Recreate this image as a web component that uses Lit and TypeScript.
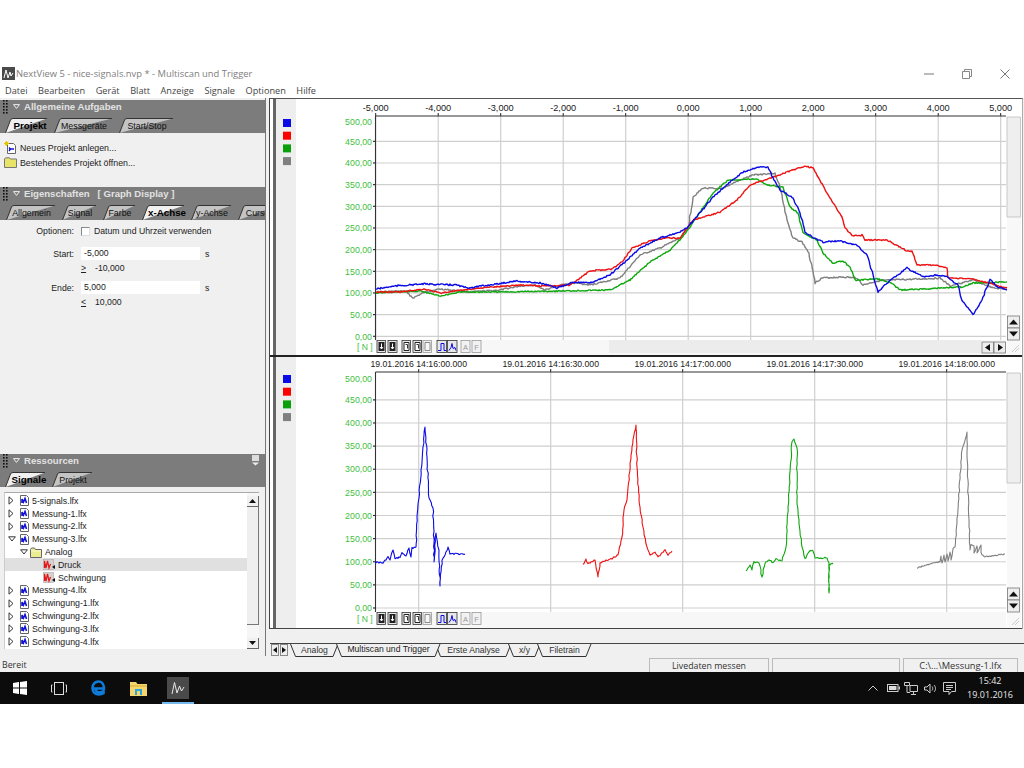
import { LitElement, html, css, svg } from "lit";
import { customElement } from "lit/decorators.js";

type P = [number, number];

function rng(seed: number) {
  let s = seed;
  return () => {
    s = (s * 9301 + 49297) % 233280;
    return s / 233280 - 0.5;
  };
}

function jag(pts: P[], amp: number, seed: number): string {
  const r = rng(seed);
  const out: string[] = [];
  for (let i = 0; i < pts.length - 1; i++) {
    const [x0, y0] = pts[i];
    const [x1, y1] = pts[i + 1];
    const dx = Math.abs(x1 - x0);
    const dy = Math.abs(y1 - y0);
    const n = Math.max(1, Math.round(Math.max(dx, dy / 4)));
    const steep = dy > dx * 2;
    for (let k = 0; k < n; k++) {
      const t = k / n;
      const nx = steep && k > 0 ? r() * amp * 0.7 : 0;
      const ny = steep ? 0 : r() * amp;
      out.push(`${(x0 + (x1 - x0) * t + nx).toFixed(1)},${(y0 + (y1 - y0) * t + ny).toFixed(1)}`);
    }
  }
  const l = pts[pts.length - 1];
  out.push(`${l[0]},${l[1]}`);
  return out.join(" ");
}

const BLUE = "#0a0ae6";
const RED = "#ee1111";
const GREEN = "#0ea80e";
const GRAY = "#808080";

const top1: { c: string; p: P[]; a: number }[] = [
  { c: GRAY, a: 1.5, p: [[376,292],[405,291],[413,298],[425,292],[440,289],[470,292],[500,290],[520,286],[535,285],[545,290],[560,285],[575,283],[590,285],[620,278],[640,255],[660,248],[680,238],[688,228],[693,197],[703,188],[723,189],[733,183],[753,175],[775,173],[780,187],[787,220],[793,238],[802,242],[809,253],[815,283],[822,278],[843,277],[857,278],[863,285],[877,281],[893,280],[920,279],[940,278],[950,286],[973,280],[993,288],[1007,289]] },
  { c: GREEN, a: 1.3, p: [[376,293],[420,291],[440,296],[460,292],[500,292],[560,291],[610,290],[630,280],[650,262],[670,250],[680,240],[690,227],[700,212],[713,193],[728,180],[757,179],[767,185],[783,187],[790,207],[798,213],[803,233],[817,240],[823,253],[833,263],[843,261],[850,267],[855,280],[877,279],[890,282],[900,290],[943,288],[963,287],[973,283],[1007,282]] },
  { c: RED, a: 1.3, p: [[376,292],[400,292],[424,289],[440,293],[480,288],[520,285],[540,286],[570,285],[590,271],[612,269],[622,262],[632,248],[650,241],[668,238],[680,238],[693,220],[720,212],[737,200],[750,185],[773,177],[793,170],[805,166],[813,168],[827,193],[842,217],[845,228],[853,236],[862,235],[865,240],[887,240],[907,251],[912,251],[917,265],[935,265],[947,268],[948,278],[973,279],[1007,288]] },
  { c: BLUE, a: 1.5, p: [[376,289],[395,286],[423,284],[457,285],[467,288],[497,284],[515,281],[540,283],[557,288],[573,282],[590,283],[610,275],[625,262],[640,248],[660,238],[680,232],[687,228],[700,213],[713,197],[730,182],[743,172],[757,167],[768,167],[773,178],[780,190],[793,198],[800,213],[805,232],[812,237],[823,242],[840,241],[857,245],[867,255],[877,288],[878,292],[887,283],[907,268],[923,277],[937,275],[947,277],[958,285],[962,300],[973,315],[982,300],[990,279],[997,287],[1007,290]] },
];

const bot: { c: string; p: P[]; a: number }[] = [
  { c: BLUE, a: 1.5, p: [[375,562],[383,563],[388,557],[390,560],[393,550],[395,559],[400,557],[402,553],[406,556],[409,548],[411,557],[412,548],[416,547],[417,517],[419,498],[421,470],[423,447],[425,427],[427,457],[429,498],[433,508],[434,543],[434,562],[436,533],[439,550],[440,586],[442,560],[445,555],[448,547],[450,554],[465,554]] },
  { c: RED, a: 1.5, p: [[583,565],[586,559],[588,564],[595,560],[598,577],[600,563],[613,558],[618,555],[622,537],[624,510],[627,500],[632,447],[636,425],[637,467],[639,500],[643,527],[647,547],[650,555],[655,552],[658,557],[665,550],[668,555],[672,551]] },
  { c: GREEN, a: 1.5, p: [[746,571],[750,565],[752,570],[754,562],[759,563],[762,577],[765,563],[770,560],[773,563],[776,559],[782,561],[786,547],[788,507],[792,442],[794,439],[797,448],[797,500],[802,547],[805,559],[810,550],[813,551],[815,558],[827,558],[829,563],[829,593],[829,565],[833,563]] },
  { c: GRAY, a: 1.2, p: [[917,568],[933,563],[940,562],[941,556],[942,563],[944,555],[945,562],[947,554],[948,561],[950,552],[951,560],[953,549],[955,547],[957,523],[962,450],[967,432],[968,488],[970,550],[971,545],[974,546],[974,553],[977,546],[977,553],[981,545],[981,553],[984,557],[1005,554]] },
];

function tool(x: number, y: number, w: number, kind: string, glyph: unknown) {
  const fill = kind === "off" ? "#f2f2f2" : "#e8e8e8";
  return svg`<rect x=${x} y=${y} width=${w} height="12" fill=${fill} stroke=${kind === "off" ? "#999" : "#333"} stroke-width=".8"/>${glyph}`;
}

function toolbar(y: number) {
  const dark = (x: number) => svg`<rect x=${x + 1.5} y=${y + 1.5} width="6" height="9" fill="#222"/><path d=${`M${x + 4.5} ${y + 3}v5m-1.5-1.5 1.5 2 1.5-2`} stroke="#fff" fill="none"/>`;
  const page = (x: number) => svg`<path d=${`M${x + 2} ${y + 2}h5v8h-5z`} fill="#fff" stroke="#222"/><path d=${`M${x + 3.5} ${y + 4}h2v4`} stroke="#333" fill="none"/>`;
  return svg`
    ${tool(377, y, 8.5, "on", dark(377))}
    ${tool(388, y, 9, "on", dark(388))}
    ${tool(402, y, 8.5, "on", page(402))}
    ${tool(413, y, 8.5, "on", page(413))}
    ${tool(423, y, 8.5, "off", svg`<path d=${`M${425} ${y + 2}h5v8h-5z`} fill="#f8f8f8" stroke="#888"/>`)}
    ${tool(437, y, 9.5, "on", svg`<path d=${`M438 ${y + 10}h3v-7h3v7h2`} stroke=${BLUE} fill="none"/>`)}
    ${tool(447.5, y, 9.5, "on", svg`<path d=${`M449 ${y + 10}l2-3 1-4 1 5 2-1 1 3`} stroke=${BLUE} fill="none"/>`)}
    ${tool(461, y, 9, "off", svg`<text class="toolT" x="465.5" y=${y + 9} text-anchor="middle">A</text>`)}
    ${tool(472, y, 9, "off", svg`<text class="toolT" x="476.5" y=${y + 9} text-anchor="middle">F</text>`)}
  `;
}

function arrowBtn(x: number, y: number, w: number, h: number, d: string) {
  return svg`<rect x=${x} y=${y} width=${w} height=${h} fill="#eee" stroke="#777" stroke-width=".8"/><path d=${d} fill="#111"/>`;
}

const yVals = ["500,00", "450,00", "400,00", "350,00", "300,00", "250,00", "200,00", "150,00", "100,00", "50,00", "0,00"];

function chart(o: {
  y0: number; h: number; axisY: number; zero: number; unit: number; tbY: number; cls: string;
  xs: { x: number; t: string }[]; series: { c: string; p: P[]; a: number }[];
  sw: number; thumbEnd: number; upY: number; hscroll: boolean; xlOff: number;
}) {
  const xr = 1006;
  const bottom = o.tbY;
  return html`<svg class="chart" viewBox="270 ${o.y0} 752 ${o.h}" width="752" height=${o.h}>
    <rect x="270" y=${o.y0} width="752" height=${o.h} fill="#fff"/>
    <rect x="273" y=${o.y0} width="3" height=${o.h} fill="#666"/>
    <rect x="276" y=${o.y0} width="20" height=${o.h} fill="#eeeeee"/>
    ${[BLUE, "#ff0000", "#0aa00a", GRAY].map((c, i) => svg`<rect x="283" y=${o.axisY + 3 + i * 12.7} width="8" height="8" fill=${c}/>`)}
    <rect x=${xr + 1} y=${o.axisY + 1} width="14" height=${o.h - (o.axisY - o.y0) - 1} fill="#f8f8f8"/>
    <rect x=${xr + 1} y=${o.axisY + 1} width="13.5" height=${o.thumbEnd - o.axisY - 1} fill="#efefef" stroke="#aaa" stroke-width=".6"/>
    ${yVals.map((t, i) => {
      const y = o.zero - (500 - i * 50) * o.unit;
      return svg`
        ${i > 0 ? svg`<line x1="373" x2=${xr} y1=${y} y2=${y} stroke="#cfcfcf" stroke-width="1.2"/><line x1="373" x2="376" y1=${y} y2=${y} stroke="#222"/>` : ""}
        <text class="yl" x="372" y=${y + (i === 0 ? 5.5 : 3.2)} text-anchor="end">${t}</text>`;
    })}
    ${o.xs.map((v) => svg`
      <line x1=${v.x} x2=${v.x} y1=${o.axisY} y2=${bottom} stroke="#cfcfcf" stroke-width="1.2"/>
      <line x1=${v.x} x2=${v.x} y1=${o.axisY - 3} y2=${o.axisY} stroke="#222"/>
      <text class=${o.cls} x=${v.x} y=${o.axisY - o.xlOff} text-anchor="middle">${v.t}</text>`)}
    <line x1="375.5" x2=${xr} y1=${o.axisY} y2=${o.axisY} stroke="#333" stroke-width="1.1"/>
    <line x1="375.5" x2="375.5" y1=${o.axisY} y2=${bottom} stroke="#333" stroke-width="1.1"/>
    ${o.series.map((s, i) => svg`<polyline points=${jag(s.p, s.a, 17 + i * 31)} fill="none" stroke=${s.c} stroke-width=${o.sw} stroke-linejoin="round"/>`)}
    <rect x="376" y=${o.tbY} width=${xr - 376} height=${o.h + o.y0 - o.tbY} fill="#f7f7f7"/>
    ${o.hscroll ? svg`<rect x="609" y=${o.tbY} width="372" height="13" fill="#ececec"/>
      ${arrowBtn(982, o.tbY + 2, 11.5, 11, `M985 ${o.tbY + 7.5}l5-3.5v7z`)}
      ${arrowBtn(994, o.tbY + 2, 11.5, 11, `M1003 ${o.tbY + 7.5}l-5-3.5v7z`)}` : ""}
    <text class="nl" x="357" y=${o.tbY + 10}>[ N ]</text>
    ${toolbar(o.tbY + 0.5)}
    ${arrowBtn(1007.5, o.upY, 12, 12, `M1013.5 ${o.upY + 3.5}l4.5 5h-9z`)}
    ${arrowBtn(1007.5, o.upY + 12, 12, 12, `M1013.5 ${o.upY + 20.5}l4.5-5h-9z`)}
    <path d=${`M1012 ${o.h + o.y0 - 3}l7-7m-4 7l4-4`} stroke="#ccc" fill="none"/>
  </svg>`;
}

const grip = html`<svg class="grip" width="5" height="14" viewBox="0 0 5 14">
  ${[1, 4, 7, 10, 13].map((y) => svg`<rect x="0" y=${y - 1} width="1.6" height="1.6" fill="#111"/><rect x="3" y=${y - 1} width="1.6" height="1.6" fill="#111"/>`)}
</svg>`;
const tri = html`<svg class="tri" width="7" height="5" viewBox="0 0 7 5"><path d="M.5.6h6L3.500 4.400z" fill="none" stroke="#eee"/></svg>`;

function tab(label: string, w: number, active = false) {
  const h = 15;
  return html`<div class="tab ${active ? "on" : ""}" style="width:${w}px">
    <svg width=${w} height=${h} viewBox="0 0 ${w} ${h}"><path d="M.5 ${h}L5.5 2Q6.2.5 8 .5H${w - 8}Q${w - 6}.5 ${w - 5.5} 2L${w - 1} ${h}" fill=${active ? "#f0f0f0" : "#c4c4c4"} stroke="#333"/></svg>
    <span>${label}</span>
  </div>`;
}

function btab(label: string, w: number, ml: number, active = false) {
  return html`<div class="btab ${active ? "on" : ""}" style="width:${w}px;margin-left:${ml}px">
    <svg width=${w} height="13" viewBox="0 0 ${w} 13"><path d="M.5 0L5.500 12.500H${w - 6}L${w - 1} 0" fill="#f0f0f0" stroke="#333"/></svg>
    <span>${label}</span>
  </div>`;
}

const fileIcon = html`<svg class="ic" width="9" height="11" viewBox="0 0 9 11"><path d="M.5.5h6l2 2v8h-8z" fill="#fff" stroke="#666"/><path d="M2 8V4l1.500 3L5 3.500 6.500 8" fill="none" stroke="#1212d8" stroke-width="1.6"/></svg>`;
const folderIcon = html`<svg class="ic" width="12" height="11" viewBox="0 0 12 11"><path d="M.5 2.500L1.500 1h3l1 1.500h6v8H.5z" fill="#ecec90" stroke="#666"/><path d="M1 4h10" stroke="#fbfbc8"/></svg>`;
const sigIcon = html`<svg class="ic" width="13" height="11" viewBox="0 0 13 11"><rect x=".5" y=".5" width="10" height="10" fill="#d8d0d0" stroke="#aaa" stroke-width=".6"/><path d="M1.500 9V2l1.500 7 1.500-7 1.500 7 1.500-4" fill="none" stroke="#e01818" stroke-width="1.2"/><path d="M9 8l3-2v4z" fill="#111"/></svg>`;
const expR = html`<span class="exb"><svg width="6" height="9" viewBox="0 0 6 9"><path d="M1 .8L5 4.500 1 8.200z" fill="#fff" stroke="#222" stroke-width=".9"/></svg></span>`;
const expD = html`<span class="exb"><svg width="8" height="6" viewBox="0 0 8 6"><path d="M.6.8h6.800L4 5z" fill="#fff" stroke="#222" stroke-width=".9"/></svg></span>`;

const tree: { t: string; d: number; k: string; open?: boolean; sel?: boolean }[] = [
  { t: "5-signals.lfx", d: 0, k: "f" },
  { t: "Messung-1.lfx", d: 0, k: "f" },
  { t: "Messung-2.lfx", d: 0, k: "f" },
  { t: "Messung-3.lfx", d: 0, k: "f", open: true },
  { t: "Analog", d: 1, k: "d", open: true },
  { t: "Druck", d: 2, k: "s", sel: true },
  { t: "Schwingung", d: 2, k: "s" },
  { t: "Messung-4.lfx", d: 0, k: "f" },
  { t: "Schwingung-1.lfx", d: 0, k: "f" },
  { t: "Schwingung-2.lfx", d: 0, k: "f" },
  { t: "Schwingung-3.lfx", d: 0, k: "f" },
  { t: "Schwingung-4.lfx", d: 0, k: "f" },
];

@customElement("app-root")
export class AppRoot extends LitElement {
  static styles = css`
    :host { display: block; width: 1024px; height: 768px; background: #fff; overflow: hidden; font-family: "Liberation Sans", Arial, sans-serif; font-size: 8.8px; color: #222; }
    .topgap { height: 65px; background: #fff; }
    .window { height: 607px; display: flex; flex-direction: column; background: #f0f0f0; }
    .title { height: 17px; background: #fff; display: flex; align-items: center; padding-left: 2px; font-family: "Open Sans", sans-serif; font-size: 9.4px; color: #808080; }
    .title .name { margin-left: 1px; flex: 1; }
    .wc { display: flex; width: 114px; }
    .wc div { width: 38px; display: flex; justify-content: center; }
    .menu { height: 16px; background: #fff; display: flex; align-items: center; font-family: "Open Sans", sans-serif; font-size: 9.2px; color: #444; padding-left: 5px; }
    .menu span { margin-right: 10.5px; }
    .main { height: 558px; display: flex; }
    .left { width: 265px; display: flex; flex-direction: column; background: #f0f0f0; flex: none; padding-top: 2px; box-sizing: border-box; }
    .block { background: #7c7c7c; height: 33px; flex: none; display: flex; flex-direction: column; overflow: hidden; }
    .head { height: 18px; flex: none; display: flex; align-items: center; padding: 0 0 5px 3px; box-sizing: border-box; color: #e2e2e2; font-weight: bold; font-size: 9.6px; }
    .grip { margin-right: 5px; }
    .tri { margin-right: 4px; }
    .head .pin { margin-left: auto; margin-right: 5px; }
    .tabs { display: flex; padding-left: 5px; height: 15px; flex: none; }
    .tabs.t2 { padding-left: 6px; }
    .tab { display: grid; margin-right: -1px; align-items: center; justify-items: center; font-size: 8.8px; color: #111; flex: none; }
    .tab > * { grid-area: 1 / 1; }
    .tab span { z-index: 1; padding-right: 6px; }
    .tab.on { z-index: 2; font-weight: bold; font-size: 9.8px; color: #000; }
    .tab.on span { padding-right: 0; }
    .c1 { height: 54px; flex: none; padding: 7px 0 0 4px; box-sizing: border-box; }
    .c1 .l { display: flex; align-items: center; height: 15px; gap: 3px; font-size: 8.8px; }
    .c2 { height: 234px; flex: none; padding-top: 6px; box-sizing: border-box; }
    .row { display: flex; align-items: center; font-size: 8.7px; }
    .lab { width: 74px; text-align: right; margin-right: 7px; flex: none; }
    .check { width: 9px; height: 9px; box-sizing: border-box; background: #fff; border: 1px solid #888; border-right-color: #ddd; border-bottom-color: #ddd; margin-right: 4px; }
    .r1 { height: 10px; }
    .r2 { height: 13px; margin-top: 11px; }
    .r3 { height: 14px; margin-top: 1px; }
    .r4 { height: 13px; margin-top: 6px; }
    .input { width: 116px; height: 13px; line-height: 13px; background: #fff; padding-left: 3px; margin-right: 5px; flex: none; box-sizing: content-box; }
    .ge { margin-right: 7px; text-decoration: underline; width: 7px; }
    .c3 { flex: 1; padding: 5px 6px 7px 4px; min-height: 0; display: flex; }
    .treebox { flex: 1; background: #fff; display: flex; border-top: 1px solid #aaa; border-left: 1px solid #ccc; }
    .rows { flex: 1; padding-top: 1.5px; min-width: 0; }
    .tr { height: 12.8px; display: flex; align-items: center; }
    .tr.sel { background: #e0e0e0; }
    .exb { width: 8px; height: 10px; display: flex; align-items: center; flex: none; }
    .d0 { padding-left: 3px; gap: 3px; }
    .d0 .ic { margin-right: 0; margin-left: 1px; }
    .d1 { padding-left: 15px; gap: 2px; }
    .d1 .ic { margin-right: 1px; }
    .d2 { padding-left: 38px; gap: 2px; }
    .scr { width: 12px; flex: none; display: flex; flex-direction: column; background: #f6f6f6; padding-top: 3px; }
    .sb { height: 11px; display: flex; align-items: center; justify-content: center; background: #f0f0f0; border-right: 1px solid #666; border-bottom: 1px solid #666; box-sizing: border-box; flex: none; }
    .thumb { height: 118px; background: #efefef; border-right: 1px solid #777; border-bottom: 1px solid #777; box-sizing: border-box; flex: none; }
    .track { flex: 1; }
    .split { width: 4px; flex: none; background: #f0f0f0; border-left: 1.5px solid #777; box-sizing: border-box; }
    .right { flex: 1; display: flex; flex-direction: column; min-width: 0; }
    .frame { width: 754px; border-top: 1px solid #555; border-left: 1px solid #444; border-right: 1px solid #aaa; box-sizing: border-box; height: 531px; flex: none; overflow: hidden; background: #fff; display: flex; flex-direction: column; }
    .chart { display: block; flex: none; }
    .sep { height: 2px; background: #222; flex: none; }
    .bline { height: 1px; background: #444; flex: none; margin-top: auto; }
    .gap { height: 14px; flex: none; }
    .btabs { height: 13px; flex: none; display: flex; border-top: 1px solid #444; margin-left: 1px; }
    .nav { display: flex; gap: 1px; width: 18px; padding-left: 1px; flex: none; }
    .nav div { width: 8px; height: 12px; background: #eee; border: 1px solid #888; box-sizing: border-box; display: flex; align-items: center; justify-content: center; }
    .btab { display: grid; align-items: center; justify-items: center; font-size: 8.6px; flex: none; color: #333; }
    .btab > * { grid-area: 1 / 1; }
    .btab span { z-index: 1; padding-bottom: 2px; }
    .btab.on { z-index: 2; margin-top: -1px; color: #222; }
    .status { height: 16px; flex: none; display: flex; align-items: flex-end; font-family: "Open Sans", sans-serif; font-size: 8.8px; color: #333; }
    .status .b { flex: 1; padding-left: 2px; height: 14px; line-height: 14px; }
    .sp { height: 14px; line-height: 14px; text-align: center; border: 1px solid #bbb; border-bottom: none; box-sizing: border-box; margin-right: 3px; }
    .s1 { width: 120px; }
    .s2 { width: 128px; }
    .s3 { width: 115px; margin-right: 6px; font-size: 9.3px; }
    .taskbar { height: 32px; background: #0c0c0c; display: flex; align-items: center; color: #eee; font-family: "Open Sans", sans-serif; }
    .cell { width: 39.5px; height: 32px; display: flex; align-items: center; justify-content: center; flex: none; }
    .cell.app { border-bottom: 2px solid #76b9ed; box-sizing: border-box; width: 32px; margin-left: 3.5px; padding-top: 2px; }
    .tile { width: 22px; height: 22px; background: #4a4a4a; display: flex; align-items: center; justify-content: center; }
    .tray { margin-left: auto; display: flex; align-items: center; height: 32px; gap: 6px; padding-right: 11px; }
    .tray .bat { margin-left: 3px; }
    .tray .net { margin-left: -2px; }
    .clock { margin-left: 5px; text-align: center; font-size: 9px; line-height: 14.5px; color: #e8e8e8; }
    .rest { flex: 1; background: #fff; }
    .yl { font-family: "Liberation Sans", sans-serif; font-size: 8.8px; fill: #3fbf3f; }
    .nl { font-family: "Liberation Sans", sans-serif; font-size: 8.6px; fill: #3fbf3f; }
    .xn { font-family: "Liberation Sans", sans-serif; font-size: 9.2px; fill: #222; }
    .xt { font-family: "Liberation Sans", sans-serif; font-size: 8.7px; fill: #222; }
    .toolT { font-family: "Liberation Sans", sans-serif; font-size: 7.5px; fill: #999; }
  `;

  render() {
    const xs1 = ["-5,000", "-4,000", "-3,000", "-2,000", "-1,000", "0,000", "1,000", "2,000", "3,000", "4,000", "5,000"].map((t, i) => ({ x: 375.7 + i * 62.5, t }));
    const xs2 = ["14:16:00.000", "14:16:30.000", "14:17:00.000", "14:17:30.000", "14:18:00.000"].map((t, i) => ({ x: 418.7 + i * 132, t: "19.01.2016 " + t }));
    return html`
      <div class="topgap"></div>
      <div class="window">
        <div class="title">
          <svg width="13" height="13" viewBox="0 0 13 13"><rect width="13" height="13" fill="#4a4a4a"/><path d="M2 11L4 3l2 8 2-6 1 4 2-3" fill="none" stroke="#fff"/></svg>
          <span class="name">NextView 5 - nice-signals.nvp * - Multiscan und Trigger</span>
          <div class="wc">
            <div><svg width="10" height="10" viewBox="0 0 10 10"><path d="M0 5h10" stroke="#777"/></svg></div>
            <div><svg width="10" height="10" viewBox="0 0 10 10"><path d="M.5 2.500h7v7h-7zM2.500 2.500V.5h7v7h-2" fill="none" stroke="#888"/></svg></div>
            <div><svg width="10" height="10" viewBox="0 0 10 10"><path d="M.5.5l9 9m0-9l-9 9" stroke="#777" fill="none"/></svg></div>
          </div>
        </div>
        <div class="menu">
          ${["Datei", "Bearbeiten", "Gerät", "Blatt", "Anzeige", "Signale", "Optionen", "Hilfe"].map((m) => html`<span>${m}</span>`)}
        </div>
        <div class="main">
          <div class="left">
            <div class="block">
              <div class="head">${grip}${tri}Allgemeine Aufgaben</div>
              <div class="tabs">${tab("Projekt", 50, true)}${tab("Messgeräte", 66)}${tab("Start/Stop", 62)}</div>
            </div>
            <div class="c1">
              <div class="l"><svg width="13" height="13" viewBox="0 0 13 13"><path d="M3.500 2.500h6l2 2v8h-8z" fill="#fff" stroke="#666"/><path d="M5 8h5M5 10l1.500-2L5 6.500" stroke="#1212d8" fill="none" stroke-width="1.400"/><path d="M2.500 0v5M0 2.500h5M.8.8l3.400 3.400m0-3.400L.8 4.200" stroke="#e6c400"/></svg>Neues Projekt anlegen...</div>
              <div class="l"><svg width="13" height="11" viewBox="0 0 13 11"><path d="M.5 2L1.500.8h4l1 1.200h6v8.500H.5z" fill="#e8e46a" stroke="#777"/></svg>Bestehendes Projekt öffnen...</div>
            </div>
            <div class="block">
              <div class="head">${grip}${tri}Eigenschaften &nbsp; [ Graph Display ]</div>
              <div class="tabs t2">${tab("Allgemein", 57)}${tab("Signal", 42)}${tab("Farbe", 40)}${tab("x-Achse", 50, true)}${tab("y-Achse", 48)}${tab("Cursor", 48)}</div>
            </div>
            <div class="c2">
              <div class="row r1"><div class="lab">Optionen:</div><div class="check"></div>Datum und Uhrzeit verwenden</div>
              <div class="row r2"><div class="lab">Start:</div><div class="input">-5,000</div>s</div>
              <div class="row r3"><div class="lab"></div><span class="ge">&gt;</span>-10,000</div>
              <div class="row r4"><div class="lab">Ende:</div><div class="input">5,000</div>s</div>
              <div class="row r3"><div class="lab"></div><span class="ge">&lt;</span>10,000</div>
            </div>
            <div class="block">
              <div class="head">${grip}${tri}Ressourcen
                <svg class="pin" width="9" height="11" viewBox="0 0 9 11"><rect x="1" width="7" height="6" fill="#ddd"/><path d="M1 7.500h7L4.500 10.500z" fill="#eee"/></svg>
              </div>
              <div class="tabs">${tab("Signale", 48, true)}${tab("Projekt", 48)}</div>
            </div>
            <div class="c3">
              <div class="treebox">
                <div class="rows">
                  ${tree.map((r) => html`<div class="tr d${r.d} ${r.sel ? "sel" : ""}">
                    ${r.k === "s" ? "" : r.open ? expD : expR}
                    ${r.k === "f" ? fileIcon : r.k === "d" ? folderIcon : sigIcon}
                    <span>${r.t}</span>
                  </div>`)}
                </div>
                <div class="scr">
                  <div class="sb"><svg width="7" height="4" viewBox="0 0 7 4"><path d="M3.500 0l3.500 4H0z" fill="#111"/></svg></div>
                  <div class="thumb"></div>
                  <div class="track"></div>
                  <div class="sb"><svg width="7" height="4" viewBox="0 0 7 4"><path d="M3.500 4L7 0H0z" fill="#111"/></svg></div>
                </div>
              </div>
            </div>
          </div>
          <div class="split"></div>
          <div class="right">
            <div class="frame">
              ${chart({ y0: 99, h: 256, axisY: 116, zero: 336.3, unit: 0.4333, tbY: 340, cls: "xn", xlOff: 5.5, xs: xs1, series: top1, sw: 1.4, thumbEnd: 217, upY: 316, hscroll: true })}
              <div class="sep"></div>
              ${chart({ y0: 357, h: 271, axisY: 372, zero: 608, unit: 0.4625, tbY: 612, cls: "xt", xlOff: 5, xs: xs2, series: bot, sw: 1.1, thumbEnd: 483, upY: 588, hscroll: false })}
              <div class="bline"></div>
            </div>
            <div class="gap"></div>
            <div class="btabs">
              <div class="nav">
                <div><svg width="4" height="6" viewBox="0 0 4 6"><path d="M4 0v6L0 3z" fill="#111"/></svg></div>
                <div><svg width="4" height="6" viewBox="0 0 4 6"><path d="M0 0v6l4-3z" fill="#111"/></svg></div>
              </div>
              ${btab("Analog", 49, 1)}
              ${btab("Multiscan und Trigger", 105, -3, true)}
              ${btab("Erste Analyse", 77, -6)}
              ${btab("x/y", 33, -4)}
              ${btab("Filetrain", 55, -4)}
            </div>
          </div>
        </div>
        <div class="status">
          <div class="b">Bereit</div>
          <div class="sp s1">Livedaten messen</div>
          <div class="sp s2"></div>
          <div class="sp s3">C:\\...\\Messung-1.lfx</div>
        </div>
      </div>
      <div class="taskbar">
        <div class="cell"><svg width="14" height="14" viewBox="0 0 14 14"><path d="M0 2l6-.9V6.600H0zM7 1l7-1v6.600H7zM0 7.400h6v5.500L0 12zM7 7.400h7V14l-7-1z" fill="#fff"/></svg></div>
        <div class="cell"><svg width="16" height="13" viewBox="0 0 16 13"><rect x="3.500" y=".5" width="9" height="12" fill="none" stroke="#ddd"/><path d="M1.500 3H.5v7h1M14.500 3h1v7h-1" fill="none" stroke="#ddd"/></svg></div>
        <div class="cell"><svg width="15" height="16" viewBox="0 0 15 16"><path d="M2 8.500h11C13 4 10.500 1.500 7.500 1.500 4 1.500 1.500 4.500 1.500 8c0 4 2.500 6.500 6.500 6.500 2 0 3.500-.5 4.500-1.200v-2.300c-1 .8-2.500 1.300-4 1.300-2.300 0-3.800-1.200-4-3.800" fill="none" stroke="#0f7bd8" stroke-width="2.600"/></svg></div>
        <div class="cell"><svg width="17" height="15" viewBox="0 0 17 15"><path d="M0 1h6l1.500 2H17v12H0z" fill="#f5d66c"/><path d="M0 4h17v2H0z" fill="#e8c04c"/><rect x="5" y="8" width="7" height="6" fill="#2aa6dc"/><rect x="7" y="10" width="3" height="4" fill="#f5d66c"/></svg></div>
        <div class="cell app"><div class="tile"><svg width="14" height="14" viewBox="0 0 14 14"><path d="M1 13L3.500 1.500 6 12l2.500-7 2 5 2.500-4" fill="none" stroke="#e8e8e8"/></svg></div></div>
        <div class="tray">
          <svg width="10" height="6" viewBox="0 0 10 6"><path d="M.5 5.500L5 1l4.500 4.500" fill="none" stroke="#ccc"/></svg>
          <svg class="bat" width="13" height="8" viewBox="0 0 13 8"><rect x=".5" y=".5" width="10.500" height="7" fill="none" stroke="#ccc"/><rect x="2" y="2" width="7.500" height="4" fill="#ddd"/><rect x="11.500" y="2.500" width="1.500" height="3" fill="#ccc"/></svg>
          <svg class="net" width="14" height="13" viewBox="0 0 14 13"><path d="M.5.5h5v3h-5zM6 3.500h7.500v6H6zM9.500 9.500v3M7 12.500h5M3 3.500v7h3" fill="none" stroke="#ccc"/></svg>
          <svg width="13" height="11" viewBox="0 0 13 11"><path d="M.5 4H3L6 1v9L3 7H.5zM8 3.500c1 1 1 3 0 4M10 2c2 2 2 5 0 7" fill="none" stroke="#ccc"/></svg>
          <svg width="13" height="13" viewBox="0 0 13 13"><path d="M.5.5h12v9H8.500L6 12.500V9.500H.5zM3 3.500h7M3 5.500h7M3 7.500h5" fill="none" stroke="#ccc"/></svg>
          <div class="clock">15:42<br />19.01.2016</div>
        </div>
      </div>
      <div class="rest"></div>
    `;
  }
}
